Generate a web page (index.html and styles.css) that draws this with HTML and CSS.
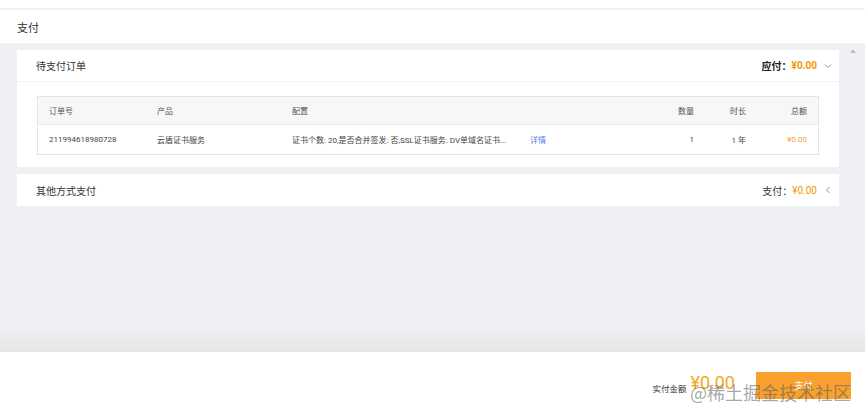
FILE: index.html
```html
<!DOCTYPE html>
<html lang="zh-CN">
<head>
<meta charset="utf-8">
<link rel="stylesheet" href="styles.css">
</head>
<body>
<div class="topstrip"></div>
<div class="titlebar">支付</div>
<div class="main">
  <div class="content">
    <section class="card">
      <div class="card-head">
        <span class="card-title">待支付订单</span>
        <span class="due"><b>应付：</b><span class="due-amt">¥0.00</span>
          <svg class="chev" width="8" height="6" viewBox="0 0 8 6"><path d="M1 1.5 L4 4.5 L7 1.5" fill="none" stroke="#999" stroke-width="1"/></svg>
        </span>
      </div>
      <div class="card-body">
        <div class="table">
          <div class="row head">
            <span class="c-id">订单号</span>
            <span class="c-prod">产品</span>
            <span class="c-conf">配置</span>
            <span class="c-qty">数量</span>
            <span class="c-dur">时长</span>
            <span class="c-total">总额</span>
          </div>
          <div class="row body">
            <span class="c-id">211994618980728</span>
            <span class="c-prod">云盾证书服务</span>
            <span class="c-conf"><span class="conf-text">证书个数: 20,是否合并签发: 否,SSL证书服务: DV单域名证书...</span><a class="detail">详情</a></span>
            <span class="c-qty">1</span>
            <span class="c-dur">1 年</span>
            <span class="c-total orange">¥0.00</span>
          </div>
        </div>
      </div>
    </section>
    <section class="card other">
      <div class="card-head">
        <span class="card-title">其他方式支付</span>
        <span class="due">支付：<span class="pay-amt">¥0.00</span>
          <svg class="chev" width="8" height="8" viewBox="0 0 8 8"><path d="M5.5 1 L2.5 4 L5.5 7" fill="none" stroke="#999" stroke-width="1"/></svg>
        </span>
      </div>
    </section>
  </div>
  <div class="scroll">
    <svg width="8" height="6" viewBox="0 0 8 6"><path d="M1 5 L4 1.5 L7 5 Z" fill="#bbb"/></svg>
  </div>
</div>
<footer class="footer">
  <span class="final-label">实付金额</span>
  <span class="final-amt">¥0.00</span>
  <button class="pay-btn">支付</button>
  <span class="watermark">@稀土掘金技术社区</span>
</footer>
</body>
</html>
```
FILE: styles.css
```css
html, body {
  margin: 0;
  padding: 0;
}
* {
  box-sizing: border-box;
}
body {
  width: 865px;
  height: 418px;
  display: flex;
  flex-direction: column;
  font-family: Roboto, "Noto Sans CJK SC", sans-serif;
  color: #333;
  background: #fff;
  overflow: hidden;
}
.topstrip {
  height: 10px;
  background: #fff;
  border-bottom: 2px solid #f2f2f4;
}
.titlebar {
  height: 33px;
  display: flex;
  align-items: center;
  padding-left: 17px;
  font-size: 11px;
  color: #333;
  background: #fff;
}
.main {
  flex: 1;
  display: flex;
  background: linear-gradient(to bottom, #f0f0f4 0, #f0f0f4 calc(100% - 24px), #e6e6e8 100%);
  padding-top: 7px;
  padding-left: 17px;
}
.content {
  width: 822px;
  display: flex;
  flex-direction: column;
  gap: 7px;
}
.scroll {
  flex: 1;
  display: flex;
  justify-content: center;
  padding-left: 2px;
}
.scroll svg {
  margin-top: -2px;
}
.card {
  background: #fff;
}
.card-head {
  height: 32px;
  display: flex;
  align-items: center;
  justify-content: space-between;
  padding: 0 7px 0 19px;
  border-bottom: 1px solid #f4f4f6;
}
.card.other .card-head {
  border-bottom: none;
}
.card-title {
  font-size: 10px;
  color: #333;
}
.due {
  display: flex;
  align-items: center;
  font-size: 10px;
  color: #333;
}
.due b {
  font-weight: 700;
  color: #222;
}
.due-amt {
  color: #f39800;
  font-weight: 700;
  font-size: 10px;
}
.pay-amt {
  color: #f39800;
  font-size: 10px;
}
.chev {
  margin-left: 7px;
}
.card-body {
  padding: 14px 20px 12px 20px;
}
.table {
  border: 1px solid #e4e4e6;
  padding-right: 11px;
  background: #fff;
}
.row {
  display: flex;
  align-items: center;
  font-size: 8px;
  color: #444;
  margin-right: -11px;
  padding-right: 11px;
}
.row.head {
  height: 27px;
  background: #f7f7f7;
  color: #555;
}
.row.body {
  height: 30px;
  background: #fff;
  border-top: 1px solid #ececee;
}
.c-id {
  width: 119px;
  padding-left: 11px;
}
.c-prod {
  width: 135px;
}
.c-conf {
  width: 342px;
  display: flex;
  align-items: center;
}
.conf-text {
  width: 238px;
  white-space: nowrap;
  overflow: hidden;
}
.detail {
  color: #5b7ef0;
}
.c-qty {
  width: 60px;
  text-align: right;
}
.c-dur {
  width: 52px;
  text-align: right;
}
.c-total {
  width: 61px;
  text-align: right;
}
.orange {
  color: #f5a03a;
}
.footer {
  height: 66px;
  position: relative;
  display: flex;
  align-items: center;
  justify-content: flex-end;
  padding-right: 14px;
  background: #fff;
}
.final-label {
  font-size: 8.5px;
  color: #333;
  margin-right: 4px;
  margin-top: 5px;
}
.final-amt {
  font-size: 18px;
  color: #f5a623;
  margin-right: 21px;
  margin-top: -6px;
}
.pay-btn {
  width: 95px;
  height: 27px;
  border: none;
  background: #f9a12f;
  color: #fff;
  font-family: "Noto Sans CJK SC", sans-serif;
  font-size: 9px;
  margin-top: 1px;
  padding: 0;
}
.watermark {
  position: absolute;
  right: 14px;
  top: 30px;
  font-family: "Noto Sans CJK SC", sans-serif;
  font-size: 18px;
  line-height: 20px;
  color: rgba(90, 90, 90, 0.55);
  letter-spacing: 0;
  pointer-events: none;
}
```
